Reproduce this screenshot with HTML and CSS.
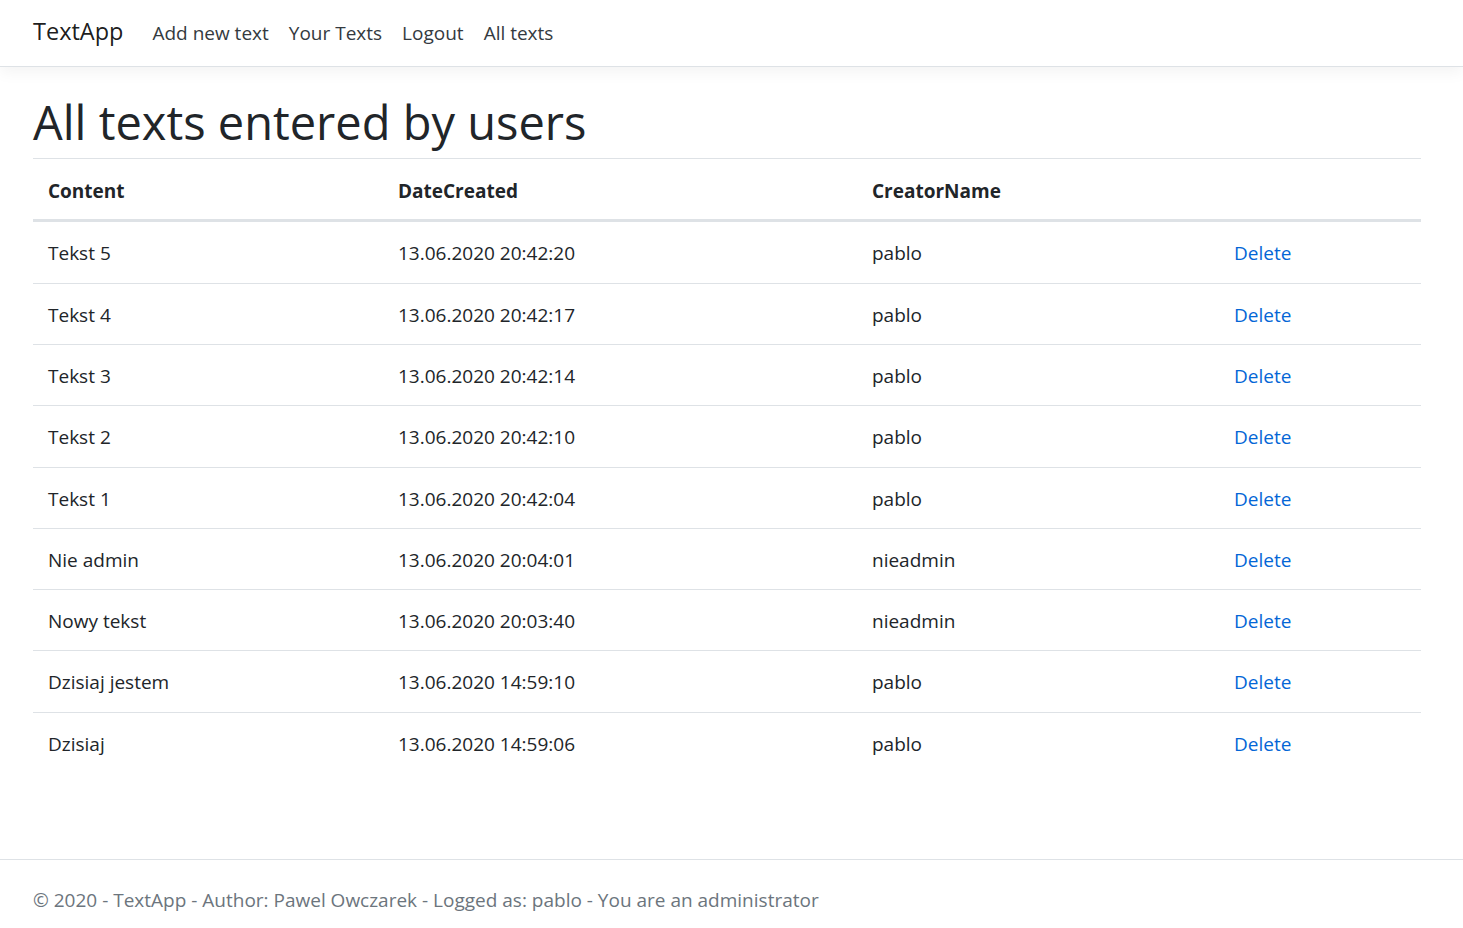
FILE: index.html
```html
<!DOCTYPE html>
<html lang="en">
<head>
<meta charset="utf-8">
<title>All texts - TextApp</title>
<link rel="stylesheet" href="styles.css">
</head>
<body>
<header class="navbar">
  <a class="brand" href="#">TextApp</a>
  <nav class="nav">
    <a class="nav-link" href="#">Add new text</a>
    <a class="nav-link" href="#">Your Texts</a>
    <a class="nav-link" href="#">Logout</a>
    <a class="nav-link" href="#">All texts</a>
  </nav>
</header>
<main class="main">
  <h1 class="title">All texts entered by users</h1>
  <table class="table">
    <colgroup>
      <col class="c1"><col class="c2"><col class="c3"><col class="c4">
    </colgroup>
    <thead>
      <tr><th>Content</th><th>DateCreated</th><th>CreatorName</th><th></th></tr>
    </thead>
    <tbody>
      <tr><td>Tekst 5</td><td>13.06.2020 20:42:20</td><td>pablo</td><td><a class="link" href="#">Delete</a></td></tr>
      <tr><td>Tekst 4</td><td>13.06.2020 20:42:17</td><td>pablo</td><td><a class="link" href="#">Delete</a></td></tr>
      <tr><td>Tekst 3</td><td>13.06.2020 20:42:14</td><td>pablo</td><td><a class="link" href="#">Delete</a></td></tr>
      <tr><td>Tekst 2</td><td>13.06.2020 20:42:10</td><td>pablo</td><td><a class="link" href="#">Delete</a></td></tr>
      <tr><td>Tekst 1</td><td>13.06.2020 20:42:04</td><td>pablo</td><td><a class="link" href="#">Delete</a></td></tr>
      <tr><td>Nie admin</td><td>13.06.2020 20:04:01</td><td>nieadmin</td><td><a class="link" href="#">Delete</a></td></tr>
      <tr><td>Nowy tekst</td><td>13.06.2020 20:03:40</td><td>nieadmin</td><td><a class="link" href="#">Delete</a></td></tr>
      <tr><td>Dzisiaj jestem</td><td>13.06.2020 14:59:10</td><td>pablo</td><td><a class="link" href="#">Delete</a></td></tr>
      <tr><td>Dzisiaj</td><td>13.06.2020 14:59:06</td><td>pablo</td><td><a class="link" href="#">Delete</a></td></tr>
    </tbody>
  </table>
</main>
<footer class="footer">
  <div class="footer-inner">&copy; 2020 - TextApp - Author: Pawel Owczarek - Logged as: pablo - You are an administrator</div>
</footer>
</body>
</html>
```

FILE: styles.css
```css
html, body {
  margin: 0;
  padding: 0;
  overflow: hidden;
}
body {
  font-family: "Open Sans", "Noto Sans", sans-serif;
  font-size: 19px;
  line-height: 1.5;
  color: #212529;
  background: #fff;
}
a { text-decoration: none; }

.navbar {
  display: flex;
  align-items: center;
  height: 66px;
  padding: 0 33px;
  border-bottom: 1px solid #dee2e6;
  box-shadow: 0 5px 15px rgba(0, 0, 0, 0.05);
  position: relative;
  z-index: 1;
}
.brand {
  font-size: 23.5px;
  color: rgba(0, 0, 0, 0.9);
  margin-right: 19px;
  margin-top: -2px;
}
.nav {
  display: flex;
}
.nav-link {
  color: #343a40;
  padding: 0 10px;
}

.main {
  height: 792px;
  padding: 0 42px 0 33px;
}
.title {
  font-size: 47px;
  font-weight: 400;
  line-height: 1.2;
  margin: 0;
  padding-top: 27px;
  padding-bottom: 8px;
}
.table {
  width: 1388px;
  border-collapse: collapse;
}
.c1 { width: 350px; }
.c2 { width: 474px; }
.c3 { width: 362px; }
.c4 { width: 202px; }
.table th, .table td {
  text-align: left;
  padding: 16px 15px 14.3px;
  border-top: 1px solid #dee2e6;
  vertical-align: top;
  line-height: 30px;
}
.table th {
  font-weight: 700;
  padding-top: 17px;
  padding-bottom: 13px;
  border-bottom: 3px solid #dee2e6;
}
.table tbody tr:first-child td {
  border-top: 0;
}
.link {
  color: #0366d6;
}

.footer {
  border-top: 1px solid #dee2e6;
  height: 67px;
  color: #6c757d;
  white-space: nowrap;
}
.footer-inner {
  padding: 13px 33px 0;
  line-height: 55px;
}
```
